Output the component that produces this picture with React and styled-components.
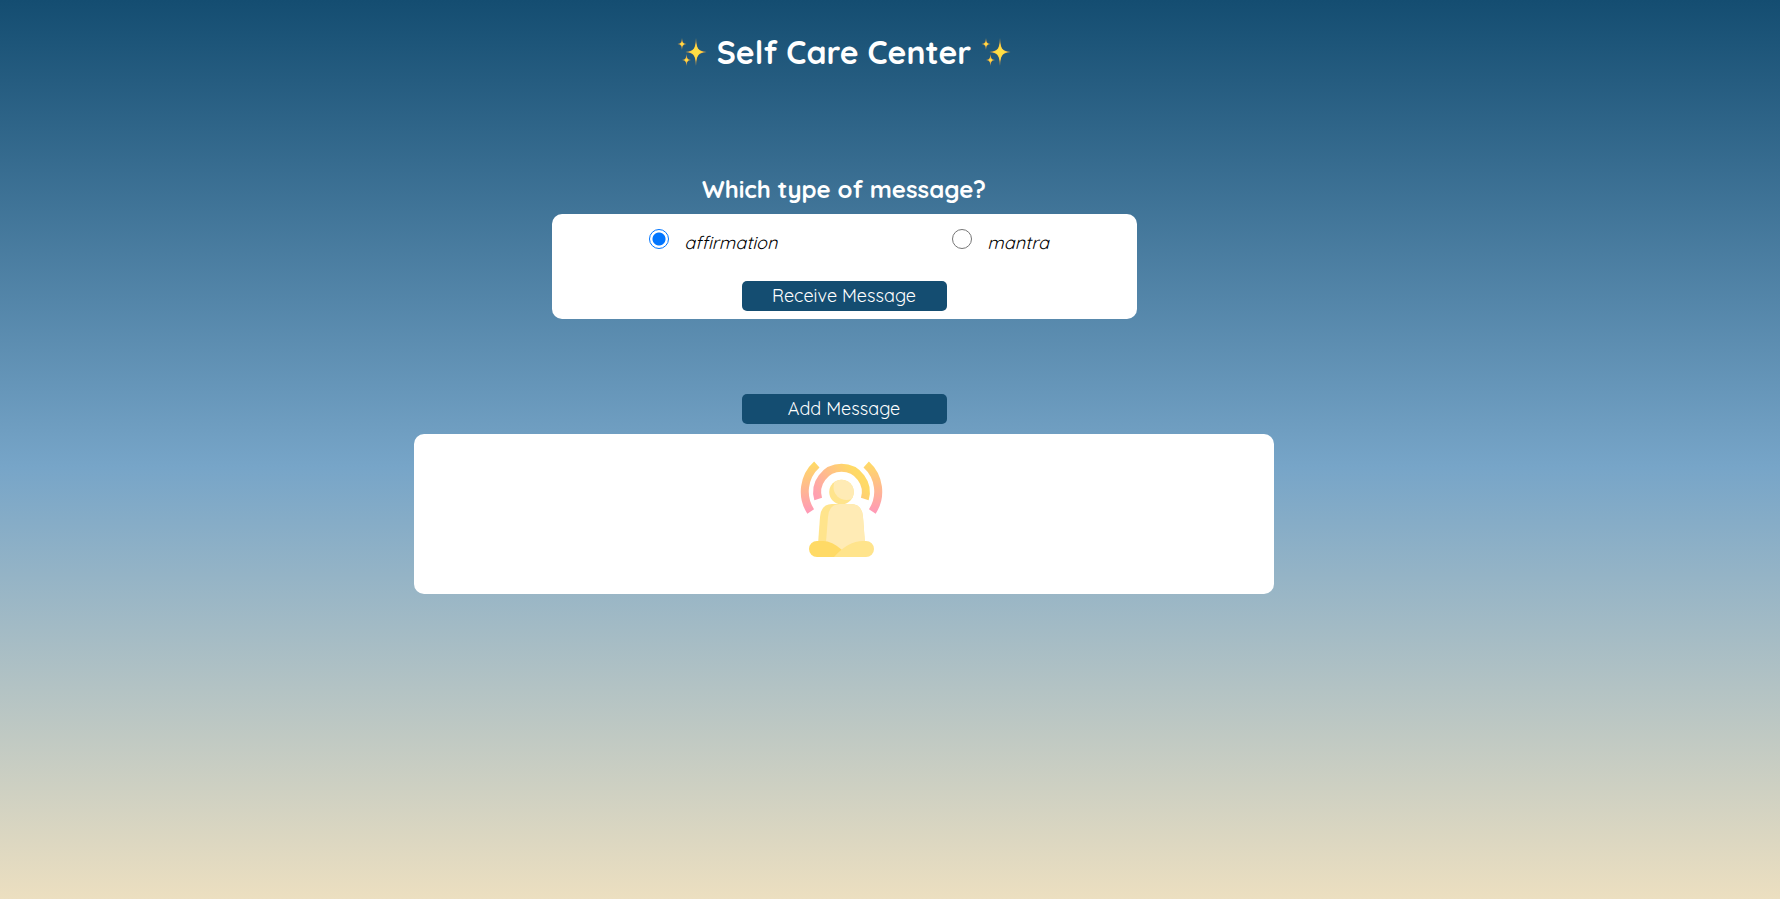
import React from 'react';
import styled, { createGlobalStyle } from 'styled-components';

const GlobalStyle = createGlobalStyle`
  * { box-sizing: border-box; }
  body {
    margin: 0;
    font-family: Quicksand, Lato, "Liberation Sans", sans-serif;
    color: #000;
  }
`;

const Page = styled.main`
  min-height: 100vh;
  padding: 30px 92px 24px 0;
  display: flex;
  flex-direction: column;
  align-items: center;
  background: linear-gradient(180deg, #144d71, #77a5c8 52%, #ecdfc0);
`;

const Title = styled.h1`
  display: flex;
  align-items: center;
  gap: 10px;
  margin: 0 0 99px;
  font-size: 32px;
  line-height: 44px;
  font-weight: 700;
  color: #fff;
`;

const SparkleIcon = styled.svg`
  width: 30px;
  height: 30px;
`;

const Question = styled.h2`
  margin: 0;
  font-size: 24px;
  line-height: 32px;
  font-weight: 700;
  color: #fff;
`;

const Panel = styled.section`
  background: #fff;
  border-radius: 10px;
`;

const ChoicePanel = styled(Panel)`
  width: 585px;
  max-width: 100%;
  margin: 9px 0 75px;
  padding: 14px 0 8px;
  display: flex;
  flex-direction: column;
  align-items: center;
  gap: 23px;
`;

const Choices = styled.div`
  display: flex;
  gap: 175px;
  margin-left: 10px;
`;

const Choice = styled.label`
  display: flex;
  align-items: flex-start;
  gap: 15px;
  font-size: 18px;
  line-height: 30px;
  font-style: italic;
`;

const Radio = styled.input`
  appearance: none;
  width: 20px;
  height: 20px;
  margin: 1px 0 0;
  border: 1px solid #767676;
  border-radius: 50%;
  background: #fff;

  &:checked {
    border-color: #0075ff;
    background: radial-gradient(circle, #0075ff 6px, #fff 7px);
  }
`;

const Button = styled.button`
  width: 205px;
  height: 30px;
  padding: 0;
  border: 0;
  border-radius: 5px;
  background: #144d71;
  color: #fff;
  font-family: inherit;
  font-size: 18px;
  line-height: 30px;
`;

const MessagePanel = styled(Panel)`
  width: 860px;
  max-width: 100%;
  min-height: 160px;
  margin-top: 10px;
  padding: 25px 4px 0 0;
  display: flex;
  justify-content: center;
  align-items: flex-start;
`;

const Meditation = styled.svg`
  width: 100px;
  height: 100px;
`;

function Sparkles() {
  return (
    <SparkleIcon viewBox="0 0 30 30" aria-hidden="true">
      <g fill="#f3b040">
        <path d="M19 1C19.600 11 20.500 14 29.500 15C20.500 16 19.600 19 19 29C18.400 19 17.500 16 8.500 15C17.500 14 18.400 11 19 1Z" />
        <path d="M5 1C5.400 5.500 6 6.600 9.500 7C6 7.400 5.400 8.500 5 13C4.600 8.500 4 7.400 .5 7C4 6.600 4.600 5.500 5 1Z" />
        <path d="M9.500 17C9.900 21.500 10.500 22.600 14 23C10.500 23.400 9.900 24.500 9.500 29C9.100 24.500 8.500 23.400 5 23C8.500 22.600 9.100 21.500 9.500 17Z" />
      </g>
      <g fill="#ffdf45">
        <path d="M19 6Q20 14 26 15Q20 16 19 24Q18 16 12 15Q18 14 19 6Z" />
        <circle cx="19" cy="15" r="2.500" />
        <circle cx="5" cy="7" r="1.600" />
        <circle cx="9.500" cy="23" r="1.600" />
      </g>
    </SparkleIcon>
  );
}

function MeditationIcon() {
  return (
    <Meditation viewBox="0 0 100 100" role="img" aria-label="Meditation">
      <defs>
        <linearGradient id="halo" gradientUnits="userSpaceOnUse" x1="26" y1="40" x2="62" y2="12">
          <stop stopColor="#ff9eb1" />
          <stop offset="1" stopColor="#ffda66" />
        </linearGradient>
        <linearGradient id="sound" gradientUnits="userSpaceOnUse" x1="0" y1="52" x2="0" y2="4">
          <stop stopColor="#ff9bb5" />
          <stop offset="1" stopColor="#ffda66" />
        </linearGradient>
        <clipPath id="head"><circle cx="49.500" cy="33" r="12.300" /></clipPath>
      </defs>
      <path d="M26.200 40A24.300 24.300 0 1 1 72.800 40" fill="none" stroke="url(#halo)" strokeWidth="8" />
      <path d="M24.800 5.500A36.500 36.500 0 0 0 18.700 52.500M74.200 5.500A36.500 36.500 0 0 1 80.300 52.500" fill="none" stroke="url(#sound)" strokeWidth="8" />
      <circle cx="49.500" cy="33" r="12.300" fill="#ffe48c" />
      <circle cx="54.500" cy="28" r="13" fill="#ffebb5" clipPath="url(#head)" />
      <path d="M40 45H59Q70 45 71 58L73 85H26L28 58Q29 45 40 45Z" fill="#ffe48c" />
      <path d="M48 45H59Q70 45 71 58L73 85L50 92L34 83L36 58Q37 45 48 45Z" fill="#ffebb5" />
      <path d="M25 82H31Q40 82 50 91L43 98H25A8 8 0 0 1 25 82Z" fill="#ffda66" />
      <path d="M74 82H71Q56 82 42 98H74A8 8 0 0 0 74 82Z" fill="#ffe48c" />
    </Meditation>
  );
}

export default function App() {
  return (
    <>
      <GlobalStyle />
      <Page>
        <Title><Sparkles />Self Care Center<Sparkles /></Title>
        <Question id="message-type">Which type of message?</Question>
        <ChoicePanel>
          <Choices role="radiogroup" aria-labelledby="message-type">
            <Choice><Radio type="radio" name="message" defaultChecked />affirmation</Choice>
            <Choice><Radio type="radio" name="message" />mantra</Choice>
          </Choices>
          <Button type="button">Receive Message</Button>
        </ChoicePanel>
        <Button type="button">Add Message</Button>
        <MessagePanel><MeditationIcon /></MessagePanel>
      </Page>
    </>
  );
}
